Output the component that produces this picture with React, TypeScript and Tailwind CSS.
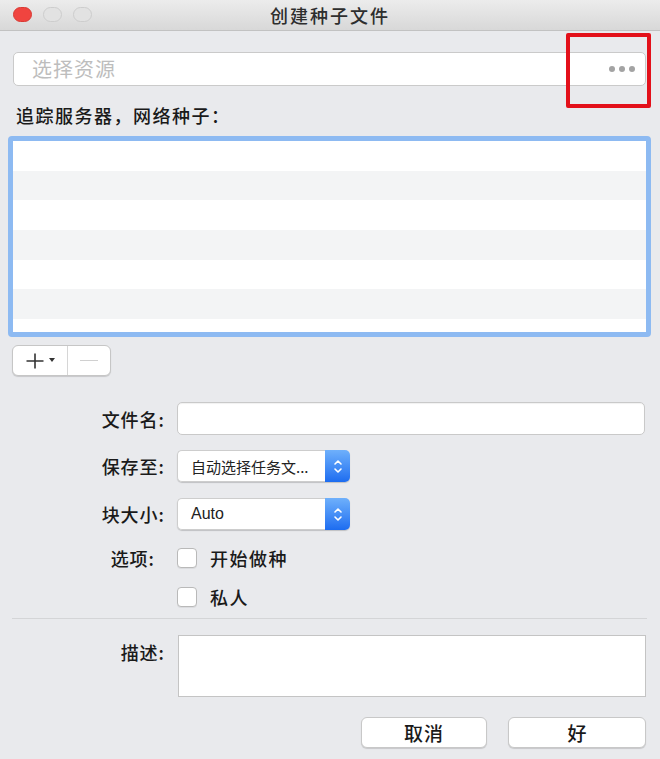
import React from "react";

function Stepper() {
  return (
    <div className="w-[25px] h-full rounded-r-[5px] bg-gradient-to-b from-[#6fb0fb] to-[#1c6cf0] flex items-center justify-center">
      <svg width="10" height="17" viewBox="0 0 10 17" fill="none">
        <path d="M2 6 L5 3 L8 6" stroke="white" strokeWidth="1.6" strokeLinecap="round" strokeLinejoin="round" />
        <path d="M2 11 L5 14 L8 11" stroke="white" strokeWidth="1.6" strokeLinecap="round" strokeLinejoin="round" />
      </svg>
    </div>
  );
}

function Select({ children }: { children: React.ReactNode }) {
  return (
    <div className="ml-[12px] w-[173px] h-[32px] flex rounded-[5px] shadow-[0_1px_1px_rgba(0,0,0,0.18)]">
      <div className="flex-1 h-full bg-white border border-r-0 border-[#cdcdcd] rounded-l-[5px] flex items-center pl-[13px] text-[#222] overflow-hidden whitespace-nowrap">
        {children}
      </div>
      <Stepper />
    </div>
  );
}

function Checkbox() {
  return <div className="ml-[12px] w-[20px] h-[20px] rounded-[4px] bg-white border border-[#b9b9b9] shadow-[0_1px_0_rgba(0,0,0,0.06)]" />;
}

export default function App() {
  const rows = [0, 1, 2, 3, 4, 5, 6];
  return (
    <div className="w-[660px] h-[759px] bg-[#e9eaed] relative overflow-hidden font-['Noto_Sans_CJK_SC','Liberation_Sans',sans-serif] text-[#222]">
      {/* title bar */}
      <div className="h-[31px] grid grid-cols-[1fr_auto_1fr] items-center bg-gradient-to-b from-[#ececec] to-[#d8d8d8] border-b border-[#c2c2c2]">
        <div className="flex items-center gap-[11px] pl-[13px] -mt-[2px]">
          <span className="w-[19px] h-[15px] rounded-full bg-[#f0443f] border border-[#d93a34]" />
          <span className="w-[19px] h-[15px] rounded-full border border-[#cdcdcd] bg-[#e2e2e2]" />
          <span className="w-[19px] h-[15px] rounded-full border border-[#cdcdcd] bg-[#e2e2e2]" />
        </div>
        <div className="text-[18px] leading-none tracking-[2px] text-[#2e2e2e] font-medium -mt-[1px]">创建种子文件</div>
        <div />
      </div>

      {/* source input */}
      <div className="mt-[21px] ml-[13px] mr-[14px] h-[34px] bg-white border border-[#cacaca] rounded-[5px] flex items-center pl-[18px] pr-[10px]">
        <span className="text-[20px] leading-none tracking-[1px] text-[#bdbdbd]">选择资源</span>
        <div className="ml-auto flex items-center gap-[4px]">
          <span className="w-[6px] h-[6px] rounded-full bg-[#a3a3a3]" />
          <span className="w-[6px] h-[6px] rounded-full bg-[#a3a3a3]" />
          <span className="w-[6px] h-[6px] rounded-full bg-[#a3a3a3]" />
        </div>
      </div>

      {/* tracker label */}
      <div className="mt-[19px] ml-[16px] text-[18px] leading-[20px] tracking-[1.5px] font-medium text-[#1a1a1a]">追踪服务器，网络种子：</div>

      {/* list */}
      <div className="mt-[11px] ml-[8px] w-[643px] h-[201px] border-[5px] border-[#8dbaf2] rounded-[4px] bg-white overflow-hidden flex flex-col">
        {rows.map((r) => (
          <div key={r} className={r % 2 === 1 ? "h-[29.7px] shrink-0 bg-[#f3f4f5]" : "h-[29.7px] shrink-0 bg-white"} />
        ))}
      </div>

      {/* +/- buttons */}
      <div className="mt-[8px] ml-[12px] w-[99px] h-[31px] flex rounded-[6px] border border-[#c6c6c6] bg-white shadow-[0_1px_1px_rgba(0,0,0,0.15)]">
        <div className="w-[55px] h-full border-r border-[#d6d6d6] flex items-center justify-center gap-[5px]">
          <svg width="18" height="16" viewBox="0 0 18 16">
            <path d="M9 0.5 V15.5 M0.5 8 H17.5" stroke="#333" strokeWidth="1.6" />
          </svg>
          <svg width="6" height="4" viewBox="0 0 6 4" className="-mt-[2px]">
            <path d="M0 0 H6 L3 4 Z" fill="#333" />
          </svg>
        </div>
        <div className="flex-1 flex items-center justify-center">
          <div className="w-[18px] h-[1.5px] bg-[#d0d0d0]" />
        </div>
      </div>

      {/* form */}
      <div className="mt-[26px] flex items-center h-[33px]">
        <div className="w-[165px] text-right text-[18px] leading-[20px] tracking-[1px] font-medium text-[#1a1a1a]">文件名:</div>
        <div className="ml-[12px] w-[468px] h-[33px] bg-white border border-[#c9c9c9] rounded-[5px] shadow-[inset_0_1px_1px_rgba(0,0,0,0.06)]" />
      </div>

      <div className="mt-[15px] flex items-center h-[32px]">
        <div className="w-[165px] text-right text-[18px] leading-[20px] tracking-[1px] font-medium text-[#1a1a1a]">保存至:</div>
        <Select>
          <span className="text-[15px] leading-none">自动选择任务文...</span>
        </Select>
      </div>

      <div className="mt-[16px] flex items-center h-[32px]">
        <div className="w-[165px] text-right text-[18px] leading-[20px] tracking-[1px] font-medium text-[#1a1a1a]">块大小:</div>
        <Select>
          <span className="text-[16px] leading-none font-['Liberation_Sans',sans-serif]">Auto</span>
        </Select>
      </div>

      <div className="mt-[18px] flex items-center h-[20px]">
        <div className="w-[165px] text-right pr-[10px] text-[18px] leading-[20px] tracking-[1px] font-medium text-[#1a1a1a]">选项:</div>
        <Checkbox />
        <div className="ml-[13px] text-[18px] leading-[20px] tracking-[1.5px] font-medium text-[#1a1a1a]">开始做种</div>
      </div>

      <div className="mt-[19px] flex items-center h-[20px]">
        <div className="w-[165px]" />
        <Checkbox />
        <div className="ml-[13px] text-[18px] leading-[20px] tracking-[1.5px] font-medium text-[#1a1a1a]">私人</div>
      </div>

      <div className="mt-[11px] ml-[12px] mr-[13px] h-[1px] bg-[#d4d5d7]" />

      <div className="mt-[16px] flex items-start">
        <div className="w-[165px] pt-[7px] text-right text-[18px] leading-[20px] tracking-[1px] font-medium text-[#1a1a1a]">描述:</div>
        <div className="ml-[13px] w-[468px] h-[62px] bg-white border border-[#c4c4c4]" />
      </div>

      <div className="mt-[20px] flex justify-end pr-[14px] gap-[21px]">
        <div className="w-[126px] h-[31px] bg-white border border-[#c8c8c8] rounded-[6px] shadow-[0_1px_1px_rgba(0,0,0,0.15)] flex items-center justify-center text-[19px] leading-none tracking-[1px] font-medium text-[#1a1a1a]">取消</div>
        <div className="w-[138px] h-[31px] bg-white border border-[#c8c8c8] rounded-[6px] shadow-[0_1px_1px_rgba(0,0,0,0.15)] flex items-center justify-center text-[19px] leading-none font-medium text-[#1a1a1a]">好</div>
      </div>

      {/* red annotation box */}
      <div className="absolute left-[566px] top-[33px] w-[85px] h-[75px] border-[4px] border-[#e3101a] rounded-[2px]" />
    </div>
  );
}
